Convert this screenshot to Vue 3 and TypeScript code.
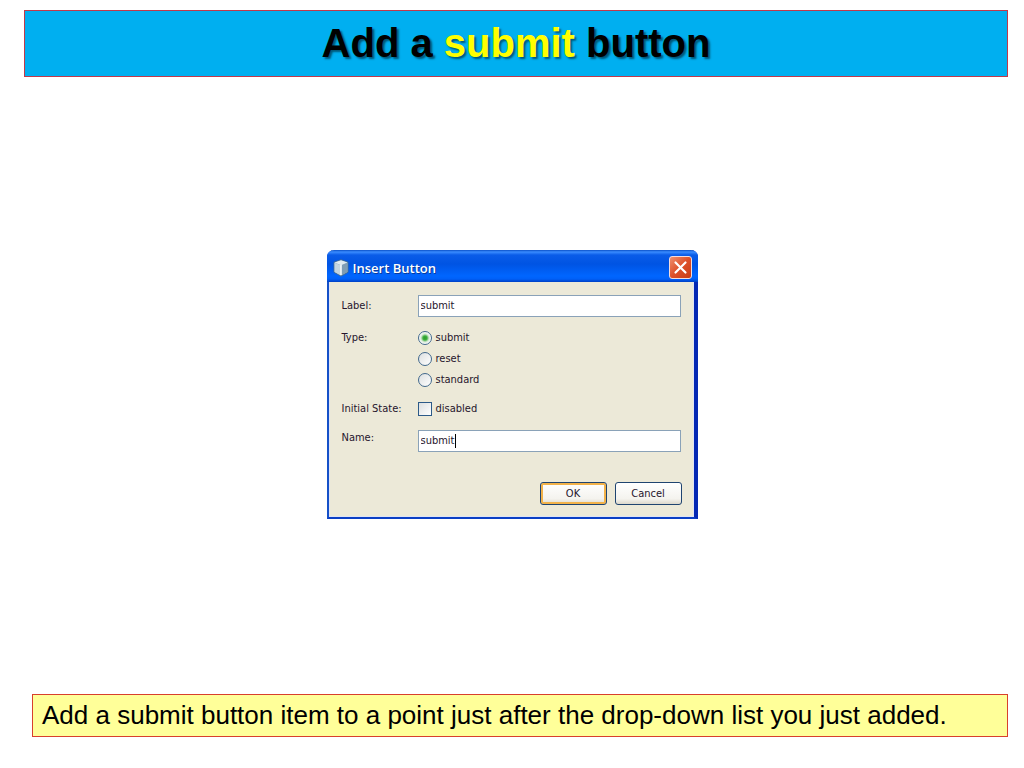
<script setup lang="ts">
import { ref } from 'vue'

type ButtonType = 'submit' | 'reset' | 'standard'

const types: ButtonType[] = ['submit', 'reset', 'standard']
const label = ref<string>('submit')
const selected = ref<ButtonType>('submit')
const disabled = ref<boolean>(false)
const name = ref<string>('submit')
</script>

<template>
  <div class="slide">
    <header class="banner">
      <h1>Add a <span class="accent">submit</span> button</h1>
    </header>

    <main class="stage">
      <form class="dialog" role="dialog" aria-labelledby="dialog-title" @submit.prevent>
        <div class="titlebar">
          <svg class="cube" viewBox="0 0 16 18" aria-hidden="true">
            <path d="M8 0.8 L15 3.2 V13.2 L8 17.2 L1 13.2 V3.2 Z" fill="#8fa9bd" stroke="#3c6a98" stroke-width="1" />
            <path d="M8 1.3 L14.5 3.5 L8 6.2 L1.5 3.5 Z" fill="#dfeaf0" />
            <path d="M1.5 3.8 L8 6.4 V16.6 L1.5 12.9 Z" fill="#c3d5e0" />
            <path d="M8 6.4 L14.5 3.8 V12.9 L8 16.6 Z" fill="#7f9db4" />
            <path d="M8 6 V16" stroke="#f4f9fb" stroke-width="1.6" />
          </svg>
          <h2 id="dialog-title">Insert Button</h2>
          <button type="button" class="close" aria-label="Close">
            <svg viewBox="0 0 21 21" aria-hidden="true">
              <path d="M5.5 5.5 L15.5 15.5 M15.5 5.5 L5.5 15.5" stroke="#fff" stroke-width="2.2" stroke-linecap="round" />
            </svg>
          </button>
        </div>

        <div class="body">
          <div class="row">
            <label class="caption" for="label-field">Label:</label>
            <div class="field"><input id="label-field" v-model="label" type="text" /></div>
          </div>
          <div class="row types" role="radiogroup" aria-labelledby="type-caption">
            <span id="type-caption" class="caption">Type:</span>
            <div class="options">
              <label v-for="t in types" :key="t" class="option">
                <input v-model="selected" type="radio" name="type" :value="t" />{{ t }}
              </label>
            </div>
          </div>
          <div class="row">
            <span class="caption">Initial State:</span>
            <label class="option"><input v-model="disabled" type="checkbox" />disabled</label>
          </div>
          <div class="row name">
            <label class="caption" for="name-field">Name:</label>
            <div class="field">
              <input id="name-field" v-model="name" type="text" />
              <span class="caret"></span>
            </div>
          </div>
          <div class="actions">
            <button type="submit" class="push primary">OK</button>
            <button type="button" class="push">Cancel</button>
          </div>
        </div>
      </form>
    </main>

    <footer class="note">Add a submit button item to a point just after the drop-down list you just added.</footer>
  </div>
</template>

<style>
body {
  margin: 0;
  background: #fff;
}
</style>

<style scoped>
* {
  box-sizing: border-box;
}
.slide {
  min-height: 100vh;
  display: flex;
  flex-direction: column;
  font-family: "Liberation Sans", Arial, sans-serif;
  color: #000;
}
.banner {
  margin: 10px 16px 0 24px;
  border: 1px solid #c0394b;
  background: #00aff0;
  text-align: center;
}
h1 {
  margin: 0;
  font-size: 40px;
  line-height: 65px;
  font-weight: 700;
  text-shadow: 2px 2px 2px rgba(0, 0, 0, 0.5);
}
.accent {
  color: #ff0;
}
.stage {
  flex: 1;
  display: flex;
  align-items: center;
  justify-content: center;
  padding-bottom: 2px;
}
.dialog {
  width: 371px;
  font-family: "DejaVu Sans Condensed", Tahoma, sans-serif;
  font-size: 11px;
  color: #26152c;
  background: #ece9d8;
  border: solid;
  border-width: 0 4px 2px 2px;
  border-color: #0a2fc0 #0428b4 #0b3fc4 #1550c8;
  border-radius: 7px 7px 0 0;
}
.titlebar {
  height: 32px;
  margin: 0 -4px 0 -2px;
  padding: 3px 6px 0 6px;
  display: flex;
  align-items: center;
  border-radius: 7px 7px 0 0;
  background: linear-gradient(#0a50c8 0, #3a8cff 2px, #0a5ce8 5px, #0054e3 14px, #0066ff 26px, #0060f8 29px, #0040c4 32px);
}
.cube {
  width: 16px;
  height: 18px;
}
h2 {
  flex: 1;
  margin: 0 0 0 4px;
  font-family: "Open Sans", "Noto Sans", sans-serif;
  font-size: 13px;
  line-height: 18px;
  font-weight: 600;
  color: #fff;
  text-shadow: 1px 1px 0 #0a3c9c;
}
.close {
  width: 23px;
  height: 23px;
  padding: 0;
  border: 1px solid #f4dcdc;
  border-radius: 3px;
  background: linear-gradient(135deg, #ef9070, #dd5029 50%, #c83c14);
}
.close svg {
  display: block;
  width: 21px;
  height: 21px;
}
.body {
  padding: 13px 12px 11px 12px;
  border: solid #dfe4f4;
  border-width: 0 1px 1px 1px;
}
.row {
  display: flex;
  min-height: 22px;
  line-height: 22px;
  margin-bottom: 8px;
}
.row.types {
  margin-top: 10px;
  line-height: 21px;
}
.caption {
  width: 76px;
  flex: none;
}
.field {
  flex: 1;
  position: relative;
}
.field input {
  display: block;
  width: 100%;
  height: 22px;
  padding: 0 2px;
  border: 1px solid #8aa2b8;
  border-radius: 0;
  background: #fff;
  color: inherit;
  font: inherit;
  outline: none;
}
.caret {
  position: absolute;
  left: 37px;
  top: 4px;
  width: 1px;
  height: 14px;
  background: #000;
}
.option {
  display: flex;
  align-items: center;
}
.option input {
  appearance: none;
  width: 14px;
  height: 14px;
  margin: 0 4px 0 0;
  border: 1px solid #2c5a88;
  background: linear-gradient(135deg, #dcdfe0, #fff);
}
.option input[type="radio"] {
  border-radius: 50%;
  border-color: #41688c;
}
.option input[type="radio"]:checked {
  background: radial-gradient(circle, #2a9a2a 0, #3cae3c 2px, #d4e8d4 4px, #fff 6px);
}
.row.name {
  margin-top: 10px;
  margin-bottom: 0;
}
.row.name .caption {
  line-height: 16px;
}
.actions {
  display: flex;
  justify-content: flex-end;
  gap: 8px;
  margin: 30px -1px 0 0;
}
.push {
  width: 67px;
  height: 23px;
  padding: 0;
  border: 1px solid #1f4470;
  border-radius: 3px;
  background: linear-gradient(#fff, #f4f3ee 75%, #dcd8cc);
  color: inherit;
  font: inherit;
}
.push.primary {
  box-shadow: inset 0 0 0 2px #f2b24a;
}
.note {
  margin: 0 16px 31px 32px;
  padding: 0 9px;
  border: 1px solid #d8402c;
  background: #ff9;
  font-size: 26px;
  line-height: 41px;
}
</style>
